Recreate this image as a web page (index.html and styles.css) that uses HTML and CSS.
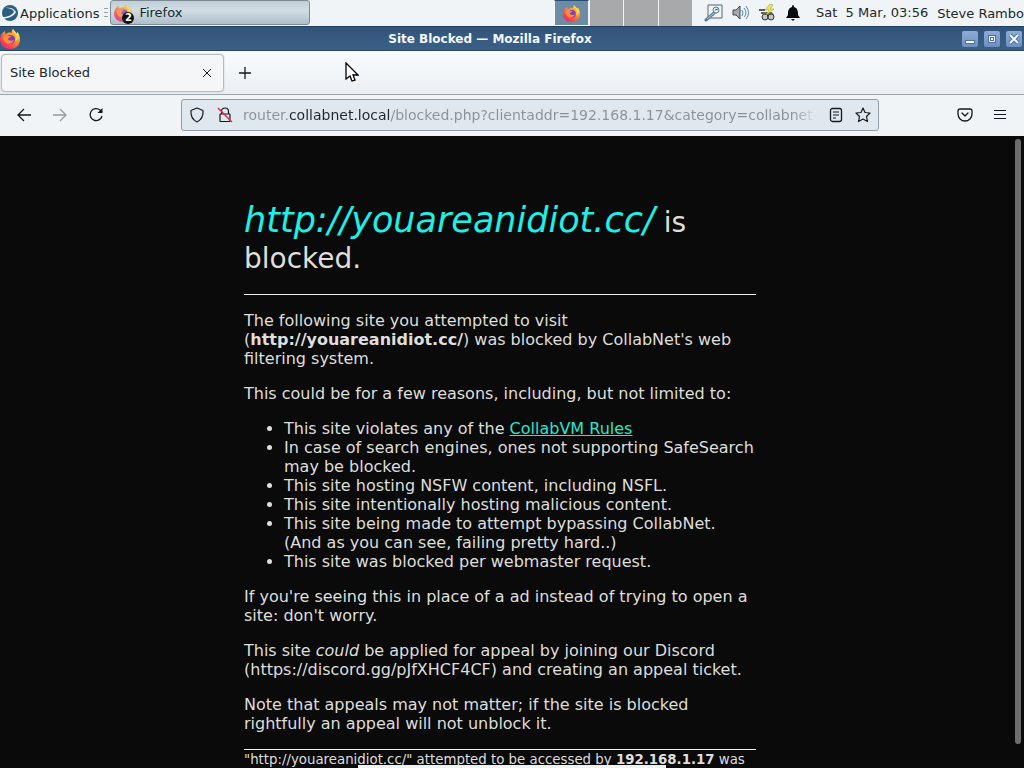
FILE: index.html
```html
<!DOCTYPE html>
<html lang="en">
<head>
    <meta charset="utf-8">
    <title>Site Blocked</title>
    <link rel="stylesheet" href="styles.css">
</head>
<body>
    <!-- Shared Firefox logo -->
    <svg class="defs" width="0" height="0" aria-hidden="true">
        <defs>
            <linearGradient id="flame" x1="1" y1="0" x2="0.2" y2="1">
                <stop offset="0" stop-color="#ffe94a"/>
                <stop offset="0.4" stop-color="#ff9a2e"/>
                <stop offset="0.75" stop-color="#f9484f"/>
                <stop offset="1" stop-color="#d9267d"/>
            </linearGradient>
            <symbol id="firefox" viewBox="0 0 20 20">
                <path fill="url(#flame)" d="M13 0c-2 2-1 3-1 4C9 3 7 4 6 5 5 4 5 3 5 2 3 3 1 6 1 6L0 10c0 6 4 10 10 10s10-4 10-10c0-3-1-5-3-7v2c-1-2-3-3-4-5z"/>
                <circle cx="10.500" cy="10.500" r="4.500" fill="#7a3fc4"/>
                <path fill="#ff8a3a" d="M3 7c2-1 4-1 5 0h3c0 1-3 2-3 3 1 2 4 2 6 1-1 4-6 5-9 2-2-2-2-4-2-6z"/>
                <path fill="#ffd83f" d="M13 0c-1 3 3 4 3 8 0 2-1 4-1 4s4-1 4-5c0-2-1-3-2-4v2c-1-2-3-3-4-5z"/>
            </symbol>
        </defs>
    </svg>

    <header class="panel">
        <button class="panel-button">
            <svg width="18" height="18" viewBox="0 0 18 18" aria-hidden="true">
                <circle cx="9" cy="9" r="8" fill="#2b5f80"/>
                <path d="M4 4c5 0 8 1 9 4-2 3-6 5-12 5l1 2c6-1 11-3 13-7-2-4-6-5-11-4z" fill="#f0f5f8"/>
            </svg>
            Applications
        </button>
        <span class="grip"></span>
        <button class="task">
            <span class="task-icon">
                <svg width="18" height="18" opacity="0.8" aria-hidden="true"><use href="#firefox"/></svg>
                <span class="badge">2</span>
            </span>
            Firefox
        </button>
        <div class="workspaces">
            <button class="workspace active" aria-label="Workspace 1">
                <svg width="17" height="17" aria-hidden="true"><use href="#firefox"/></svg>
            </button>
            <button class="workspace" aria-label="Workspace 2"></button>
            <button class="workspace" aria-label="Workspace 3"></button>
            <button class="workspace" aria-label="Workspace 4"></button>
        </div>
        <div class="tray">
            <svg width="20" height="18" viewBox="0 0 20 18" aria-hidden="true">
                <path d="M4 1h14v13H4z" fill="#eef6f8" stroke="#586571"/>
                <path d="M2 16l8-7" stroke="#5b7d94" stroke-width="3" stroke-linecap="round"/>
                <path d="M3 15l7-6" stroke="#b5d0db"/>
                <circle cx="12" cy="6" r="3" fill="#dceaf0" stroke="#5f7f93"/>
                <path d="M11 6l3-1" stroke="#446780"/>
            </svg>
            <svg width="18" height="18" viewBox="0 0 18 18" aria-hidden="true">
                <path d="M1 6h3l4-4v13l-4-4H1z" fill="#a4aaad" stroke="#3e474c"/>
                <path d="M10 6q2 3 0 6M12 4q4 5 0 9M14 2q5 7 0 13" fill="none" stroke="#5689ba"/>
            </svg>
            <svg width="18" height="18" viewBox="0 0 18 18" aria-hidden="true">
                <path d="M1 6h6M3 9h4" stroke="#565d5d" stroke-width="2"/>
                <path d="M5 8h9l2 3v3H5z" fill="#6b716d"/>
                <circle cx="7" cy="13" r="3" fill="#c1c7c4" stroke="#333"/>
                <circle cx="13" cy="13" r="3" fill="#c1c7c4" stroke="#333"/>
                <path d="M12 0L7 6h4L8 11l8-6h-4l3-4z" fill="#edea45" stroke="#9b972b" stroke-width="0.500"/>
            </svg>
            <svg width="18" height="18" viewBox="0 0 18 18" aria-hidden="true">
                <path d="M9 1q1 0 1 2c3 1 4 3 4 7 0 2 1 2 2 4H2c1-2 2-2 2-4 0-4 1-6 4-7q0-2 1-2zM7 15h4l-2 2z" fill="#080b0d"/>
            </svg>
        </div>
        <time class="clock">Sat&nbsp; 5 Mar, 03:56</time>
        <button class="panel-button user">Steve Rambo</button>
    </header>

    <div class="titlebar">
        <svg width="20" height="20" aria-hidden="true"><use href="#firefox"/></svg>
        <div class="window-title">Site Blocked — Mozilla Firefox</div>
        <div class="window-buttons">
            <button aria-label="Minimize"><svg width="16" height="16" aria-hidden="true"><path d="M3 11h10" stroke="#5070a0" stroke-width="4"/><path d="M4 11h8" stroke="#fff" stroke-width="2"/></svg></button>
            <button aria-label="Maximize"><svg width="16" height="16" fill="none" aria-hidden="true"><path d="M5.500 5.500h5v5h-5z" stroke="#5070a0" stroke-width="3"/><path d="M5.500 5.500h5v5h-5z" stroke="#eef7ff"/><path d="M7 8h2" stroke="#eef7ff" stroke-width="2"/></svg></button>
            <button aria-label="Close"><svg width="16" height="16" aria-hidden="true"><path d="M4 4l8 8M12 4l-8 8" stroke="#5070a0" stroke-width="4"/><path d="M4 4l8 8M12 4l-8 8" stroke="#f3f9ff" stroke-width="2"/></svg></button>
        </div>
    </div>

    <div class="tabs">
        <div class="tab">
            <span>Site Blocked</span>
            <button class="icon-button" aria-label="Close tab"><svg width="10" height="10" aria-hidden="true"><path d="M1 1l8 8M9 1l-8 8"/></svg></button>
        </div>
        <button class="icon-button" aria-label="New tab"><svg width="14" height="14" aria-hidden="true"><path d="M7 1v12M1 7h12" stroke-width="1.300"/></svg></button>
    </div>

    <nav class="toolbar">
        <div class="nav-buttons">
            <button class="icon-button" aria-label="Back"><svg width="16" height="16" aria-hidden="true"><path d="M15 8H2M8 2L2 8l6 6" stroke-width="1.300"/></svg></button>
            <button class="icon-button" aria-label="Forward" disabled><svg width="16" height="16" aria-hidden="true"><path d="M1 8h13M8 2l6 6-6 6" stroke-width="1.300"/></svg></button>
            <button class="icon-button" aria-label="Reload"><svg width="16" height="16" aria-hidden="true"><path d="M14 9a6 6 0 1 1-2-6l2 2" stroke-width="1.300"/><path d="M14.500 1v5h-5z" fill="#15191d" stroke="none"/></svg></button>
        </div>
        <div class="urlbar">
            <svg width="16" height="16" aria-hidden="true"><path d="M8 1l6 2.500c.5 5-1 9-6 11.500C3 12.500 1.500 8.500 2 3.500z" stroke-width="1.200" stroke-linejoin="round"/></svg>
            <svg width="16" height="16" aria-hidden="true"><path d="M4.500 7V4.500a3.500 3.500 0 0 1 7 0V7M3 7.500q0-.5.5-.5h9q.5 0 .5.500V14q0 .5-.5.500h-9Q3 14.500 3 14z" stroke-width="1.200"/><path d="M1 1l14 14" class="slash"/></svg>
            <input type="text" class="url" aria-label="Address" value="router.collabnet.local/blocked.php?clientaddr=192.168.1.17&amp;category=collabnet-rules" spellcheck="false">
            <button class="icon-button" aria-label="Reader view"><svg width="14" height="16" aria-hidden="true"><rect x="1.500" y="1.500" width="11" height="13" rx="2" stroke-width="1.300"/><path d="M4 5h6M4 8h6M4 11h3"/></svg></button>
            <button class="icon-button" aria-label="Bookmark"><svg width="16" height="16" aria-hidden="true"><path d="M8 1l2 4.500 5 .5-3.500 3.500 1 5L8 12l-4.500 2.500 1-5L1 6l5-.5z" stroke-width="1.200" stroke-linejoin="round"/></svg></button>
        </div>
        <div class="menu-buttons">
            <button class="icon-button" aria-label="Pocket"><svg width="16" height="16" aria-hidden="true"><path d="M3 2h10q2 0 2 2v3a7 7 0 0 1-14 0V4q0-2 2-2zM5 6l3 3 3-3" stroke-width="1.300" stroke-linecap="round" stroke-linejoin="round"/></svg></button>
            <button class="icon-button" aria-label="Menu"><svg width="14" height="16" aria-hidden="true"><path d="M1 3.500h12M1 7.500h12M1 11.500h12" stroke-width="1.200"/></svg></button>
        </div>
    </nav>

    <main class="viewport">
        <div class="page">
            <h1><em>http://youareanidiot.cc/</em> is blocked.</h1>
            <hr>
            <p>The following site you attempted to visit (<b>http://youareanidiot.cc/</b>) was blocked by CollabNet's web filtering system.</p>
            <p>This could be for a few reasons, including, but not limited to:</p>
            <ul>
                <li>This site violates any of the <a href="#">CollabVM Rules</a></li>
                <li>In case of search engines, ones not supporting SafeSearch may be blocked.</li>
                <li>This site hosting NSFW content, including NSFL.</li>
                <li>This site intentionally hosting malicious content.</li>
                <li>This site being made to attempt bypassing CollabNet. (And as you can see, failing pretty hard..)</li>
                <li>This site was blocked per webmaster request.</li>
            </ul>
            <p>If you're seeing this in place of a ad instead of trying to open a site: don't worry.</p>
            <p>This site <i>could</i> be applied for appeal by joining our Discord (https://discord.gg/pJfXHCF4CF) and creating an appeal ticket.</p>
            <p>Note that appeals may not matter; if the site is blocked rightfully an appeal will not unblock it.</p>
            <hr>
            <footer>"http://youareanidiot.cc/" attempted to be accessed by <b>192.168.1.17</b> was</footer>
        </div>
        <div class="scrollbar"><div class="thumb"></div></div>
        <div class="dock"></div>
    </main>

    <svg class="cursor" width="14" height="20" viewBox="0 0 14 20" aria-hidden="true">
        <path d="M1 1v16l4-3 2 5 3-1-2-5h5z" fill="#fff" stroke="#000" stroke-width="1.300"/>
    </svg>
</body>
</html>
```
FILE: styles.css
```css
* {
    box-sizing: border-box;
}
body {
    margin: 0;
    height: 100vh;
    display: flex;
    flex-direction: column;
    overflow: hidden;
    font-family: "DejaVu Sans", sans-serif;
    font-size: 13px;
    color: #20272c;
    background-color: #0a0a0a;
}
button {
    font: inherit;
    color: inherit;
    border: none;
    padding: 0;
    background: none;
}
svg {
    display: block;
    flex: none;
}
.defs {
    position: absolute;
}

/* Desktop panel */
.panel {
    display: flex;
    flex: none;
    height: 26px;
    background-color: #f0f4f6;
}
.panel-button {
    display: flex;
    align-items: center;
    padding-left: 1px;
    gap: 1px;
    white-space: nowrap;
}
.grip {
    width: 4px;
    height: 10px;
    margin: 8px 2px 0 5px;
    background: repeating-linear-gradient(#9aa1a5 0 1px, transparent 1px 4px);
}
.task {
    display: flex;
    align-items: center;
    gap: 7px;
    width: 200px;
    height: 25px;
    padding-left: 3px;
    border: 1px solid #7b8a94;
    border-radius: 3px;
    background: linear-gradient(#c0ced6, #d0dde4 40%, #aebfca);
}
.task-icon {
    position: relative;
}
.badge {
    position: absolute;
    left: 8px;
    top: 8px;
    width: 12px;
    height: 12px;
    border-radius: 6px;
    background-color: #101113;
    color: #fff;
    font-size: 10px;
    line-height: 12px;
    font-weight: bold;
    text-align: center;
}
.workspaces {
    display: flex;
    margin-left: auto;
    gap: 1px;
    width: 138px;
}
.workspace {
    flex: 1;
    background-color: #a7a9ab;
}
.workspace.active {
    display: flex;
    align-items: center;
    justify-content: center;
    background-color: #6c8ba4;
    border: 1px solid #f4f8fa;
    border-top-color: #294d70;
}
.tray {
    display: flex;
    align-items: center;
    gap: 8px;
    margin: 0 14px 0 12px;
}
.clock {
    line-height: 25px;
    white-space: nowrap;
}
.user {
    margin-left: 8px;
}

/* Window frame */
.titlebar {
    display: flex;
    flex: none;
    align-items: center;
    height: 25px;
    padding-right: 2px;
    border-top: 1px solid #20405f;
    border-bottom: 1px solid #294765;
    background: linear-gradient(#315579, #3b6087);
}
.window-title {
    flex: 1;
    padding-right: 2px;
    color: #f3f8fc;
    font-size: 12px;
    line-height: 20px;
    font-weight: bold;
    text-align: center;
}
.window-buttons {
    display: flex;
    gap: 6px;
}
.window-buttons button {
    width: 16px;
    height: 16px;
    border-radius: 2px;
    background: linear-gradient(#8facd8, #6d8fc0);
}

/* Browser chrome */
.icon-button svg,
.urlbar svg {
    fill: none;
    stroke: #15191d;
}
.icon-button:disabled {
    opacity: 0.4;
}
.tabs {
    display: flex;
    flex: none;
    align-items: center;
    gap: 14px;
    height: 44px;
    padding-left: 1px;
    border-bottom: 1px solid #9ea5aa;
    background: linear-gradient(#f8fcff, #eceff1);
}
.tab {
    display: flex;
    align-items: center;
    justify-content: space-between;
    width: 223px;
    height: 38px;
    padding: 0 11px 0 8px;
    border: 1px solid #b5bbc0;
    border-radius: 4px;
    background-color: #f4f6f8;
    box-shadow: 0 0 2px #c3c8cc;
}
.toolbar {
    display: flex;
    flex: none;
    align-items: center;
    justify-content: space-between;
    height: 41px;
    padding: 0 17px 2px 16px;
    background-color: #f0f4f7;
}
.nav-buttons,
.menu-buttons {
    display: flex;
    gap: 20px;
    flex: 1;
}
.menu-buttons {
    justify-content: flex-end;
}
.nav-buttons {
    flex: 0 1 165px;
}
.urlbar {
    display: flex;
    align-items: center;
    gap: 12px;
    flex: 0 1 698px;
    height: 32px;
    padding: 0 7px;
    border: 1px solid #929ca5;
    border-radius: 3px;
    background-color: #e0e8ef;
}
.urlbar .slash {
    stroke: #e22850;
    stroke-width: 1.5px;
}
.url {
    flex: 1;
    min-width: 0;
    height: 28px;
    margin-left: -2px;
    padding: 0;
    border: none;
    outline: none;
    font-family: inherit;
    font-size: 14px;
    color: transparent;
    /* host name is darker than the rest, the end fades out */
    background: linear-gradient(to right, #899198 46px, #20272c 46px 147px, #899198 147px calc(100% - 24px), transparent);
    background-clip: text;
    -webkit-background-clip: text;
}

/* Page */
.viewport {
    position: relative;
    display: flex;
    flex: 1;
    min-height: 0;
    overflow: hidden;
    padding-left: 8px;
    font-size: 16px;
    line-height: 19px;
    color: #dededb;
}
.page {
    flex: 0 1 512px;
    margin: 0 auto;
    padding-top: 67px;
}
h1 {
    margin: 0 0 17px;
    font-size: 28px;
    font-weight: normal;
    line-height: 36px;
}
h1 em {
    font-size: 35px;
    line-height: 1;
    color: #1fefe5;
}
hr {
    margin: 16px 0 0;
    border: none;
    border-top: 1px solid #f2f2f2;
}
p,
ul {
    margin: 16px 0;
}
ul {
    padding-left: 40px;
}
a {
    color: #2ee3cb;
}
footer {
    font-size: smaller;
    white-space: nowrap;
}
.scrollbar {
    flex: none;
    width: 32px;
    padding: 3px 3px 24px 23px;
}
.thumb {
    height: 100%;
    border-radius: 3px;
    background-color: #6d6d6d;
}
.dock {
    position: absolute;
    left: 35%;
    bottom: 0;
    width: 30%;
    height: 3px;
    background-color: #eef4f4;
}
.cursor {
    position: absolute;
    left: 345px;
    top: 62px;
}
```
